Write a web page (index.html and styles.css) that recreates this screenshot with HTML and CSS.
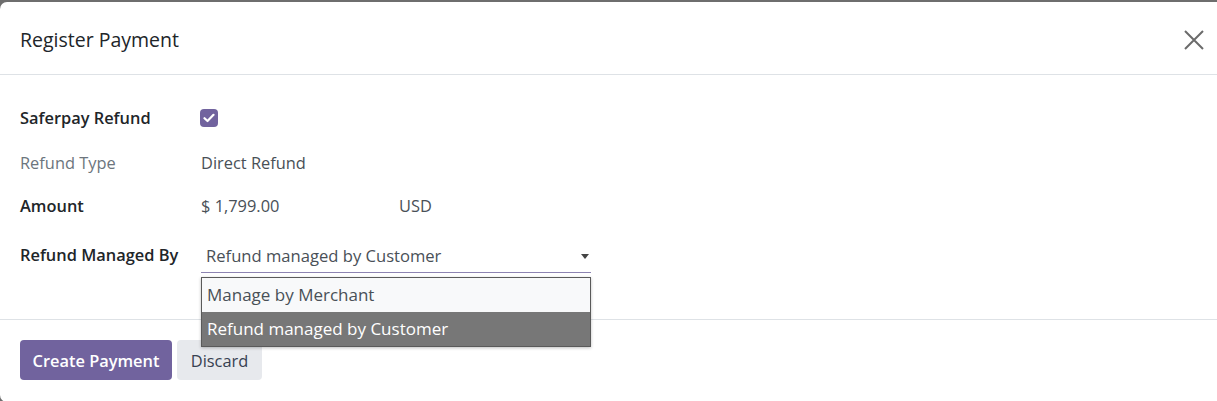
FILE: index.html
```html
<!DOCTYPE html>
<html>
<head>
<meta charset="utf-8">
<link rel="stylesheet" href="styles.css">
</head>
<body>
<div class="dialog">
  <header class="head">
    <h1 class="title">Register Payment</h1>
    <button class="close" aria-label="Close">
      <svg width="20" height="20" viewBox="0 0 20 20"><path d="M1 1L19 19M19 1L1 19" stroke="#6b6b6b" stroke-width="2" fill="none"/></svg>
    </button>
  </header>
  <main class="body">
    <div class="form">
      <div class="label strong r1">Saferpay Refund</div>
      <div class="value r1"><span class="check"><svg width="12" height="10" viewBox="0 0 12 10"><path d="M1.5 5.2L4.5 8L10.5 1.8" stroke="#fff" stroke-width="2.2" fill="none" stroke-linecap="round" stroke-linejoin="round"/></svg></span></div>

      <div class="label muted r2">Refund Type</div>
      <div class="value r2 soft">Direct Refund</div>

      <div class="label strong r3">Amount</div>
      <div class="value r3 amount"><span class="amt">$ 1,799.00</span><span class="cur">USD</span></div>

      <div class="label strong r4">Refund Managed By</div>
      <div class="value r4">
        <div class="select">
          <span>Refund managed by Customer</span>
          <span class="caret"></span>
          <ul class="menu">
            <li class="opt">Manage by Merchant</li>
            <li class="opt sel">Refund managed by Customer</li>
          </ul>
        </div>
      </div>
    </div>
  </main>
  <footer class="foot">
    <button class="btn primary">Create Payment</button>
    <button class="btn secondary">Discard</button>
  </footer>
</div>
</body>
</html>
```
FILE: styles.css
```css
html, body { margin: 0; padding: 0; }
body {
  background: #6e6e6e;
  font-family: "Open Sans", "Noto Sans", sans-serif;
  color: #212529;
  padding-top: 2px;
  height: 399px;
  overflow: hidden;
}
.dialog {
  background: #fff;
  border-radius: 7px 0 0 7px;
  height: 400px;
  display: flex;
  flex-direction: column;
}
.head {
  height: 73px;
  flex: none;
  border-bottom: 1px solid #dee2e6;
  display: flex;
  align-items: center;
  justify-content: space-between;
  padding: 0 13px 0 20px;
  box-sizing: border-box;
}
.title {
  margin: 0;
  font-size: 19.5px;
  font-weight: 400;
  color: #212529;
  position: relative; top: 1px;
}
.close {
  background: none; border: 0; padding: 0; width: 20px; height: 20px;
  display: flex; position: relative; top: 2px;
}
.body {
  height: 245px;
  flex: none;
  border-bottom: 1px solid #dee2e6;
  box-sizing: border-box;
  padding: 0 20px;
}
.form {
  display: grid;
  grid-template-columns: 181px 390px;
  grid-template-rows: 44px 46px 43px 43px 51px;
  padding-top: 21px;
  font-size: 16.4px;
  line-height: 24px;
}
.label, .value { display: flex; align-items: center; }
.strong { font-weight: 600; color: #212529; }
.muted { color: #6c757d; }
.soft { color: #495057; }
.amount { color: #495057; }
.amt { width: 198px; }
.r3 { align-items: flex-start; padding-top: 8px; }
.value.r4 { padding-top: 10px; }
.label.r4 { padding-top: 8px; }
.check {
  width: 18px; height: 18px; border-radius: 4px; background: #71639e;
  display: flex; align-items: center; justify-content: center;
  margin-left: -1px;
}
.select {
  position: relative;
  width: 390px;
  height: 32px;
  margin-top: 2px;
  border-bottom: 1px solid #8d84b2;
  box-sizing: border-box;
  display: flex; align-items: center;
  padding-left: 5px;
  color: #495057;
  font-size: 16.6px;
}
.caret {
  position: absolute; right: 2px; top: 13px;
  border-left: 4px solid transparent; border-right: 4px solid transparent;
  border-top: 5px solid #444;
}
.menu {
  position: absolute;
  left: 0; top: 36px;
  width: 390px;
  margin: 0; padding: 0;
  list-style: none;
  border: 1px solid #5a5a5a;
  box-sizing: border-box;
  background: #f8f9fa;
  box-shadow: 0 1px 3px rgba(0,0,0,0.25);
  z-index: 5;
}
.opt {
  height: 34px;
  padding-left: 5px;
  display: flex; align-items: center;
  color: #495057;
  font-size: 17px;
}
.opt.sel { background: #777; color: #fff; }
.foot {
  flex: 1;
  display: flex;
  gap: 5px;
  padding: 20px 20px 0;
  align-items: flex-start;
}
.btn {
  font-family: inherit;
  font-size: 16.4px;
  height: 40px;
  border: 0;
  border-radius: 4px;
  padding: 0;
  white-space: nowrap;
  cursor: pointer;
}
.primary { background: #71639e; color: #fff; font-weight: 600; width: 152px; }
.secondary { background: #e7e9ed; color: #374151; font-weight: 500; width: 85px; }
```
